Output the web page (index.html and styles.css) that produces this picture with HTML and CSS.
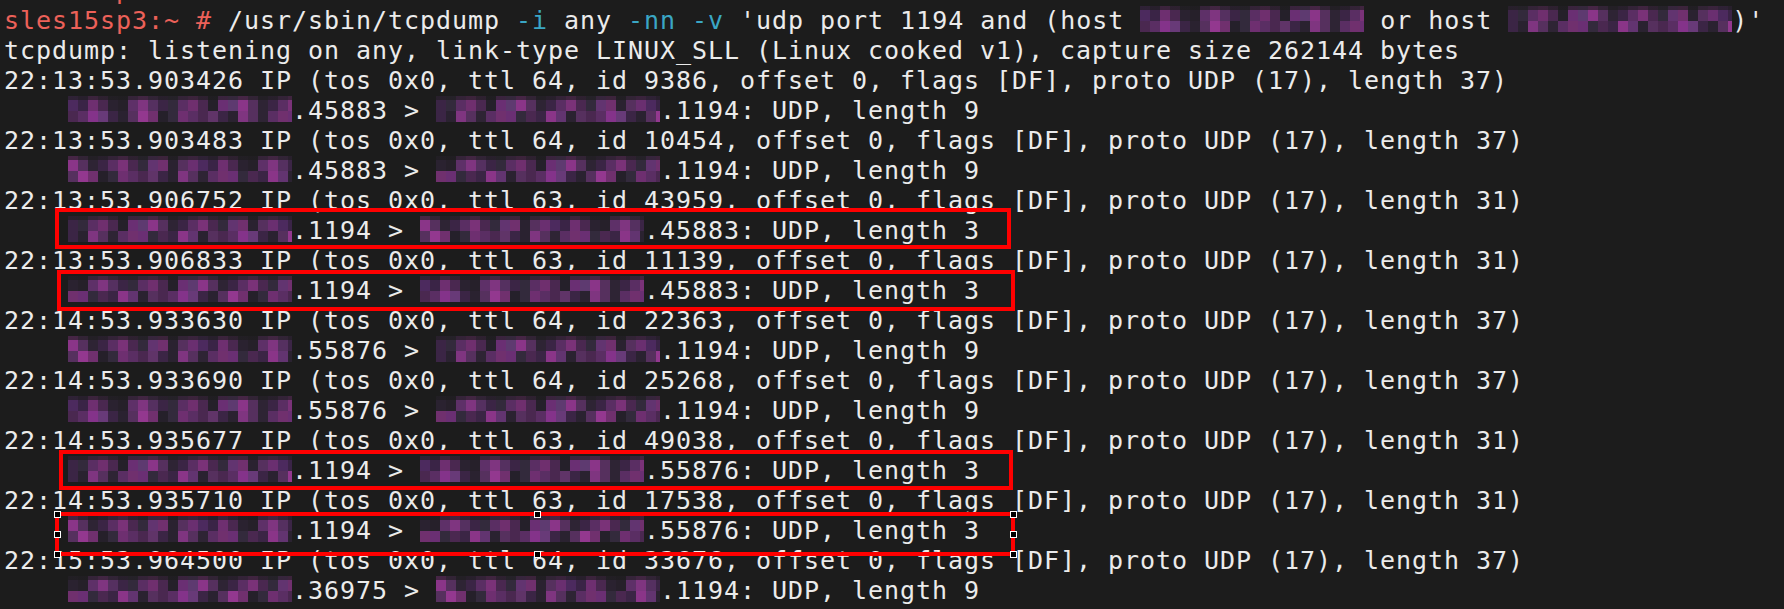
FILE: index.html
```html
<!DOCTYPE html>
<html>
<head>
<meta charset="utf-8">
<link rel="stylesheet" href="styles.css">
</head>
<body>
<div class="screen">
  <div class="term">
    <div class="ln ghost"><span class="p">sles15sp3:~ # </span></div>
    <div class="ln"><span class="p">sles15sp3:~ # </span>/usr/sbin/tcpdump <span class="c">-i</span> any <span class="c">-nn -v</span> 'udp port 1194 and (host <span class="r ra">xxxxxxxxxxxxxx</span> or host <span class="r rb">xxxxxxxxxxxxxx</span>)'</div>
    <div class="ln">tcpdump: listening on any, link-type LINUX_SLL (Linux cooked v1), capture size 262144 bytes</div>
    <div class="ln">22:13:53.903426 IP (tos 0x0, ttl 64, id 9386, offset 0, flags [DF], proto UDP (17), length 37)</div>
    <div class="ln">    <span class="r ra">xxxxxxxxxxxxxx</span>.45883 &gt; <span class="r rb">xxxxxxxxxxxxxx</span>.1194: UDP, length 9</div>
    <div class="ln">22:13:53.903483 IP (tos 0x0, ttl 64, id 10454, offset 0, flags [DF], proto UDP (17), length 37)</div>
    <div class="ln">    <span class="r rc">xxxxxxxxxxxxxx</span>.45883 &gt; <span class="r rd">xxxxxxxxxxxxxx</span>.1194: UDP, length 9</div>
    <div class="ln">22:13:53.906752 IP (tos 0x0, ttl 63, id 43959, offset 0, flags [DF], proto UDP (17), length 31)</div>
    <div class="ln">    <span class="r rb">xxxxxxxxxxxxxx</span>.1194 &gt; <span class="r rc">xxxxxxxxxxxxxx</span>.45883: UDP, length 3</div>
    <div class="ln">22:13:53.906833 IP (tos 0x0, ttl 63, id 11139, offset 0, flags [DF], proto UDP (17), length 31)</div>
    <div class="ln">    <span class="r rd">xxxxxxxxxxxxxx</span>.1194 &gt; <span class="r ra">xxxxxxxxxxxxxx</span>.45883: UDP, length 3</div>
    <div class="ln">22:14:53.933630 IP (tos 0x0, ttl 64, id 22363, offset 0, flags [DF], proto UDP (17), length 37)</div>
    <div class="ln">    <span class="r rc">xxxxxxxxxxxxxx</span>.55876 &gt; <span class="r rb">xxxxxxxxxxxxxx</span>.1194: UDP, length 9</div>
    <div class="ln">22:14:53.933690 IP (tos 0x0, ttl 64, id 25268, offset 0, flags [DF], proto UDP (17), length 37)</div>
    <div class="ln">    <span class="r ra">xxxxxxxxxxxxxx</span>.55876 &gt; <span class="r rd">xxxxxxxxxxxxxx</span>.1194: UDP, length 9</div>
    <div class="ln">22:14:53.935677 IP (tos 0x0, ttl 63, id 49038, offset 0, flags [DF], proto UDP (17), length 31)</div>
    <div class="ln">    <span class="r rb">xxxxxxxxxxxxxx</span>.1194 &gt; <span class="r ra">xxxxxxxxxxxxxx</span>.55876: UDP, length 3</div>
    <div class="ln">22:14:53.935710 IP (tos 0x0, ttl 63, id 17538, offset 0, flags [DF], proto UDP (17), length 31)</div>
    <div class="ln">    <span class="r rc">xxxxxxxxxxxxxx</span>.1194 &gt; <span class="r rd">xxxxxxxxxxxxxx</span>.55876: UDP, length 3</div>
    <div class="ln">22:15:53.964500 IP (tos 0x0, ttl 64, id 33676, offset 0, flags [DF], proto UDP (17), length 37)</div>
    <div class="ln">    <span class="r rd">xxxxxxxxxxxxxx</span>.36975 &gt; <span class="r rc">xxxxxxxxxxxxxx</span>.1194: UDP, length 9</div>
    <div class="ln">22:15:53.964571 IP (tos 0x0, ttl 64, id 33677, offset 0, flags [DF], proto UDP (17), length 37)</div>
  </div>

  <div class="box box1"></div>
  <div class="box box2"></div>
  <div class="box box3"></div>
  <div class="box box4">
    <span class="h h-tl"></span><span class="h h-tm"></span><span class="h h-tr"></span>
    <span class="h h-ml"></span><span class="h h-mr"></span>
    <span class="h h-bl"></span><span class="h h-bm"></span><span class="h h-br"></span>
  </div>
</div>
</body>
</html>
```

FILE: styles.css
```css
html, body {
  margin: 0;
  padding: 0;
  background: #1c1c1c;
  overflow: hidden;
}

.screen {
  position: relative;
  width: 1784px;
  height: 609px;
  overflow: hidden;
}

.term {
  padding-left: 4px;
  font-family: "DejaVu Sans Mono", monospace;
  font-size: 25px;
  letter-spacing: 0.95px;
  line-height: 30px;
  color: #ebebeb;
}

.ln {
  white-space: pre;
  height: 30px;
}

.ghost {
  margin-top: -24px;
}

.p { color: #ec6159; }
.c { color: #3aa6c4; }

/* pixelated redaction */
.r {
  --row1: linear-gradient(90deg,
    #4c2a5e 0 10px, #3a2446 10px 20px, #6e2f70 20px 30px, #4a2850 30px 40px,
    #2a2230 40px 50px, #26202a 50px 60px, #5e3068 60px 70px, #7f3580 70px 80px,
    #553060 80px 90px, #3b2545 90px 100px, #332a3c 100px 110px, #5a2e63 110px 120px,
    #6f2f6e 120px 130px, #4a2850 130px 140px, #25202a 140px 150px, #6a2f73 150px 160px,
    #5e3a70 160px 170px, #8a3588 170px 180px, #56305e 180px 190px, #2e2434 190px 200px,
    #3b2545 200px 210px, #5a2e63 210px 220px, #7a3278 220px 230px, #4a2850 230px 240px,
    #332a3c 240px 250px, #623470 250px 260px, #70306e 260px 270px, #2a2230 270px 280px,
    #56305e 280px 290px, #6a2f70 290px 300px);
  --row2: linear-gradient(90deg,
    #4a2850 0 10px, #5a2e63 10px 20px, #84338a 20px 30px, #683a78 30px 40px,
    #3b2545 40px 50px, #2a2230 50px 60px, #56305e 60px 70px, #93388f 70px 80px,
    #70306e 80px 90px, #25202a 90px 100px, #332a3c 100px 110px, #6e2f70 110px 120px,
    #5a2e63 120px 130px, #4a2850 130px 140px, #603468 140px 150px, #3b2545 150px 160px,
    #2a2230 160px 170px, #7f3580 170px 180px, #56305e 180px 190px, #2e2434 190px 200px,
    #5a2e63 200px 210px, #70306e 210px 220px, #6a2f73 220px 230px, #332a3c 230px 240px,
    #4a2850 240px 250px, #3b2545 250px 260px, #8a3588 260px 270px, #623470 270px 280px,
    #2a2230 280px 290px, #56305e 290px 300px);
  display: inline-block;
  vertical-align: top;
  height: 26px;
  line-height: 26px;
  color: transparent;
  background:
    linear-gradient(rgba(28, 28, 28, 0.62), rgba(28, 28, 28, 0.62)) 0 0 / 100% 4px no-repeat,
    var(--row1) 0 0 / 300px 15px repeat-x,
    var(--row2) 0 15px / 300px 11px repeat-x;
}

.ra { background-position: 0 0, 0 0, 0 15px; }
.rb { background-position: 0 0, -90px 0, -150px 15px; }
.rc { background-position: 0 0, -170px 0, -60px 15px; }
.rd { background-position: 0 0, -40px 0, -210px 15px; }

/* red annotation boxes (overlay) */
.box {
  position: absolute;
  box-sizing: border-box;
  border: 4px solid #ff0000;
}

.box1 { left: 55px; top: 208px; width: 956px; height: 41px; }
.box2 { left: 57px; top: 270px; width: 958px; height: 41px; }
.box3 { left: 59px; top: 450px; width: 954px; height: 40px; }
.box4 { left: 55px; top: 512px; width: 960px; height: 44px; }

.h {
  position: absolute;
  box-sizing: border-box;
  width: 7px;
  height: 7px;
  background: #000;
  border: 1px solid #fff;
}

.h-tl { left: -5.5px; top: -5.5px; }
.h-tm { left: 474.5px; top: -5.5px; }
.h-tr { right: -5.5px; top: -5.5px; }
.h-ml { left: -5.5px; top: 14.5px; }
.h-mr { right: -5.5px; top: 14.5px; }
.h-bl { left: -5.5px; bottom: -5.5px; }
.h-bm { left: 474.5px; bottom: -5.5px; }
.h-br { right: -5.5px; bottom: -5.5px; }
```
